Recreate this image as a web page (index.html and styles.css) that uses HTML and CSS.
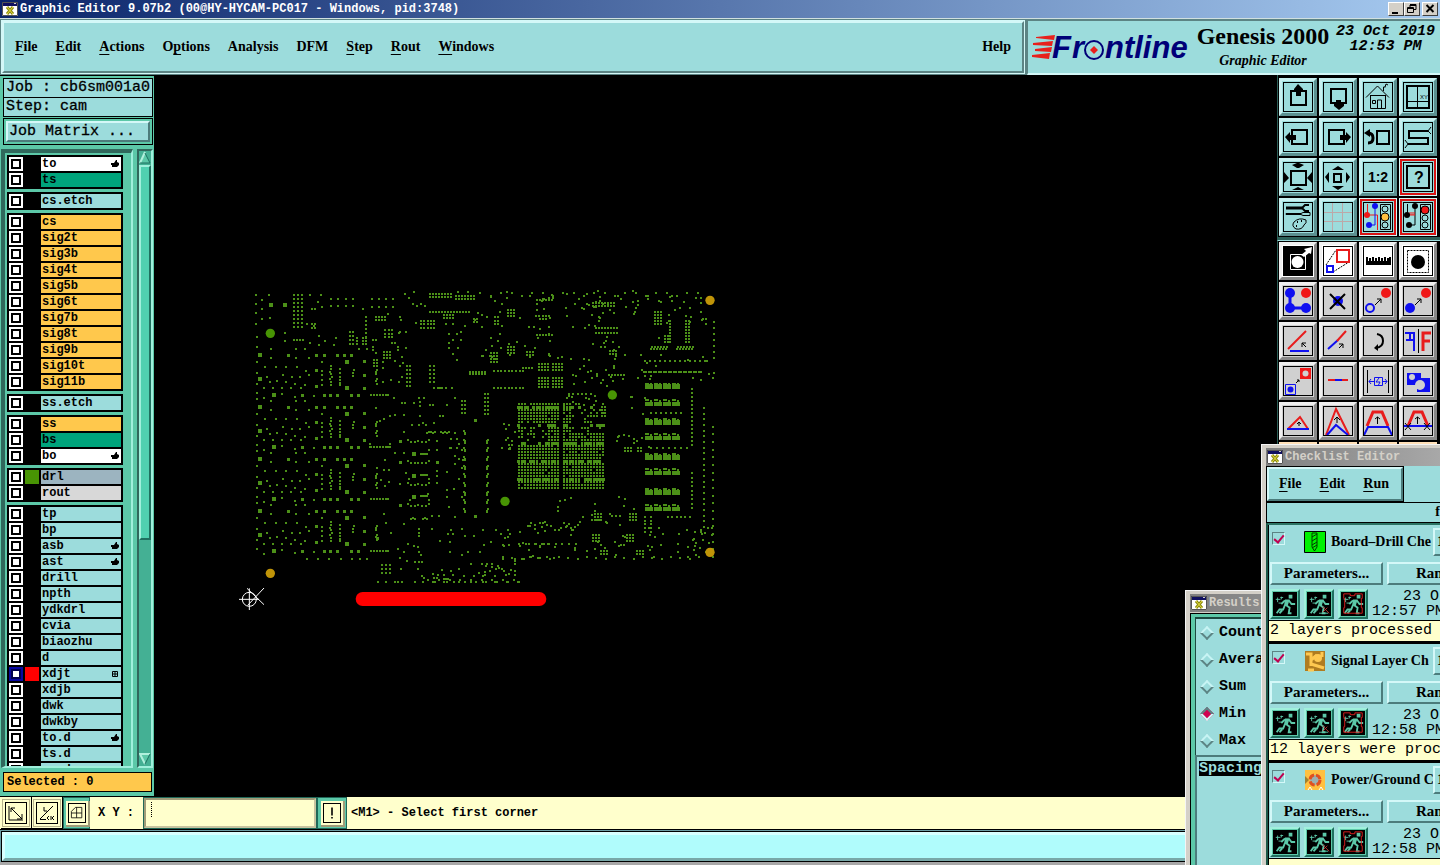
FILE: index.html
```html
<!DOCTYPE html>
<html lang="en">
<head>
<meta charset="utf-8">
<title>Graphic Editor</title>
<link rel="stylesheet" href="styles.css">
</head>

<body>
<svg class="defs" aria-hidden="true">
	<symbol id="win" viewBox="0 0 16 14">
		<path d="M0 0h16v14H0z" fill="#fff"/><path d="M0 0h16v4H0z" fill="#101060"/><path d="M12 1h2v1h-2z" fill="#ccc"/>
		<path d="M0.500 0.500h15v13h-15z" fill="none" stroke="#555"/>
		<path d="M5 5l6 7M11 5l-6 7" stroke="#8a8a10" stroke-width="3"/><path d="M5 5l6 7M11 5l-6 7" stroke="#e8e040"/>
	</symbol>
	<symbol id="run" viewBox="0 0 26 26">
		<path d="M0 0h26v26H0z" fill="#000"/>
		<path d="M17 3h4v4h-4zM13 8h5l-2 7h-4z" fill="#5cc8a8"/>
		<path d="M17 9l3 4h4M13 9l-4 4M14 14l4 3-1 6h3M13 14l-2 5H7l-3 4M10 20l-3 3" fill="none" stroke="#5cc8a8" stroke-width="2"/>
		<path d="M3 8h5M5 6v5M8 6h3M9 5v3M6 12h3" stroke="#5cc8a8"/>
	</symbol>
	<symbol id="hand" viewBox="0 0 8 8"><path d="M0 3h3l2-3h1v2l2 1v2L6 7H1V5H0z"/></symbol>
</svg>

<header class="titlebar">
	<svg class="winicon"><use href="#win"/></svg>
	<h1>Graphic Editor 9.07b2 (00@HY-HYCAM-PC017 - Windows, pid:3748)</h1>
	<button class="winbtn" aria-label="Minimize"><svg viewBox="0 0 14 12"><path d="M3 9h6v2H3z"/></svg></button>
	<button class="winbtn" aria-label="Restore"><svg viewBox="0 0 14 12"><path d="M5 1.500h6v5H9M5 2.500h6M5 2v2M2.500 4.500h6v5h-6zM2 5.500h7" fill="none" stroke="#000"/></svg></button>
	<button class="winbtn close" aria-label="Close"><svg viewBox="0 0 14 12"><path d="M3.500 2l7 7M10.500 2l-7 7" stroke="#000" stroke-width="2"/></svg></button>
</header>

<div class="top">
	<nav class="menubar">
		<button><u>F</u>ile</button>
		<button><u>E</u>dit</button>
		<button><u>A</u>ctions</button>
		<button>O<u>p</u>tions</button>
		<button>Analysis</button>
		<button>DFM</button>
		<button><u>S</u>tep</button>
		<button><u>R</u>out</button>
		<button><u>W</u>indows</button>
		<button class="help">Help</button>
	</nav>
	<div class="brand">
		<svg class="logo" viewBox="0 0 160 28" role="img" aria-label="Frontline">
			<path d="M23 2L4 4v1l18 2zM21 8L1 10v2l19 1zM20 14L3 16v2l16 1zM18 20L0 22v2l17 2z" fill="#e8201c"/>
			<text x="20" y="25" class="logotext">F</text>
			<text x="40" y="25" class="logotext">r</text>
			<text x="73" y="25" class="logotext">ntline</text>
			<circle cx="62" cy="17" r="9" fill="#9cdcdc" stroke="#000078" stroke-width="2"/>
			<path d="M62 13l4 4-4 4-4-4z" fill="#e8201c"/>
		</svg>
		<div class="product">
			<strong>Genesis 2000</strong>
			<em>Graphic Editor</em>
		</div>
		<div class="clock"><span>23 Oct 2019</span><span>12:53 PM</span></div>
	</div>
</div>

<main class="main">
	<aside class="side">
		<div class="info">
			<p>Job : cb6sm001a0</p>
			<p>Step: cam</p>
		</div>
		<div class="matrix"><button>Job Matrix ...</button></div>
		<div class="layers">
			<div class="list">
				<div class="group">
					<label class="white"><input type="checkbox"><i></i><span>to</span><svg><use href="#hand"/></svg></label>
					<label class="green"><input type="checkbox"><i></i><span>ts</span></label>
				</div>
				<div class="group">
					<label><input type="checkbox"><i></i><span>cs.etch</span></label>
				</div>
				<div class="group orange">
					<label><input type="checkbox"><i></i><span>cs</span></label>
					<label><input type="checkbox"><i></i><span>sig2t</span></label>
					<label><input type="checkbox"><i></i><span>sig3b</span></label>
					<label><input type="checkbox"><i></i><span>sig4t</span></label>
					<label><input type="checkbox"><i></i><span>sig5b</span></label>
					<label><input type="checkbox"><i></i><span>sig6t</span></label>
					<label><input type="checkbox"><i></i><span>sig7b</span></label>
					<label><input type="checkbox"><i></i><span>sig8t</span></label>
					<label><input type="checkbox"><i></i><span>sig9b</span></label>
					<label><input type="checkbox"><i></i><span>sig10t</span></label>
					<label><input type="checkbox"><i></i><span>sig11b</span></label>
				</div>
				<div class="group">
					<label><input type="checkbox"><i></i><span>ss.etch</span></label>
				</div>
				<div class="group">
					<label class="amber"><input type="checkbox"><i></i><span>ss</span></label>
					<label class="green"><input type="checkbox"><i></i><span>bs</span></label>
					<label class="white"><input type="checkbox"><i></i><span>bo</span><svg><use href="#hand"/></svg></label>
				</div>
				<div class="group">
					<label class="slate shown"><input type="checkbox"><i></i><span>drl</span></label>
					<label class="grey"><input type="checkbox"><i></i><span>rout</span></label>
				</div>
				<div class="group">
					<label><input type="checkbox"><i></i><span>tp</span></label>
					<label><input type="checkbox"><i></i><span>bp</span></label>
					<label><input type="checkbox"><i></i><span>asb</span><svg><use href="#hand"/></svg></label>
					<label><input type="checkbox"><i></i><span>ast</span><svg><use href="#hand"/></svg></label>
					<label><input type="checkbox"><i></i><span>drill</span></label>
					<label><input type="checkbox"><i></i><span>npth</span></label>
					<label><input type="checkbox"><i></i><span>ydkdrl</span></label>
					<label><input type="checkbox"><i></i><span>cvia</span></label>
					<label><input type="checkbox"><i></i><span>biaozhu</span></label>
					<label><input type="checkbox"><i></i><span>d</span></label>
					<label class="work"><input type="checkbox" checked><i></i><span>xdjt</span><svg viewBox="0 0 8 8"><path d="M1.500 1.500h5v5h-5zM4 1v6M1 4h6" fill="none" stroke="#000"/></svg></label>
					<label><input type="checkbox"><i></i><span>xdjb</span></label>
					<label><input type="checkbox"><i></i><span>dwk</span></label>
					<label><input type="checkbox"><i></i><span>dwkby</span></label>
					<label><input type="checkbox"><i></i><span>to.d</span><svg><use href="#hand"/></svg></label>
					<label><input type="checkbox"><i></i><span>ts.d</span></label>
					<label><input type="checkbox"><i></i><span>ss.d</span></label>
				</div>
			</div>
			<div class="scroll">
				<svg class="arrow" viewBox="0 0 12 14"><path d="M6 2l5 10H1z" fill="#5cc8a8"/><path d="M6 1L1 12" stroke="#b0f0dc" stroke-width="2"/><path d="M6 2l5 10H1" fill="none" stroke="#1e7060"/></svg>
				<div class="thumb"></div>
				<svg class="arrow" viewBox="0 0 12 14"><path d="M1 2h10L6 12z" fill="#5cc8a8"/><path d="M11 2H1l5 10" fill="none" stroke="#b0f0dc" stroke-width="2"/><path d="M11 2L6 12" stroke="#1e7060"/></svg>
			</div>
		</div>
		<p class="selected">Selected : 0</p>
	</aside>

	<section class="canvas">
		<svg id="board" class="board" viewBox="0 0 1500 1020">
			<rect x="362" y="936" width="572" height="42" rx="21" fill="#f00"/>
			<g fill="none" stroke="#fff" stroke-width="3"><circle cx="43" cy="958" r="21"/><path d="M12 958h60M43 925v65M36 925l51 49M87 924l-49 52"/></g>
		</svg>
	</section>

	<aside class="tools">
		<div class="toolset">
			<button aria-label="Pan up"><svg><path d="M8 9h15v14H8z" class="k2"/><path d="M15 2l5 5v3h-2v4h-5v-4h-2V7z"/></svg></button>
			<button aria-label="Pan down"><svg><path d="M8 7h15v14H8z" class="k2"/><path d="M13 18h5v4h3v2l-5 4-5-4v-2h2z"/></svg></button>
			<button aria-label="Home"><svg><path d="M3 15.500L14.500 4 26 15.500M7.500 13.500v13h15v-13M14.500 26v-8h4v8M9.500 18.500h3v3h-3zM20.500 9V5h2M22 5l1-3 2 1M7 13.500h16" class="k1"/></svg></button>
			<button aria-label="Coordinates"><svg><path d="M4 4h22v22H4z" class="k2"/><path d="M14.500 4v22M4 19.500h22" class="k1"/><text x="17" y="17" class="tiny">XY</text></svg></button>
			<button aria-label="Pan left"><svg><path d="M9 8h15v14H9z" class="k2"/><path d="M2 15l5-5v3h6v5H7v3z"/></svg></button>
			<button aria-label="Pan right"><svg><path d="M6 8h15v14H6z" class="k2"/><path d="M28 15l-5-5v3h-6v5h6v3z"/></svg></button>
			<button aria-label="Previous view"><svg><path d="M14 9h12v13H14z" class="k2"/><path d="M5 11q5 0 5 5t-5 5" class="k3"/><path d="M1 11l6-4v8z"/></svg></button>
			<button aria-label="Serpentine"><svg><path d="M25 9H6v7h19v6H5" class="k2"/><path d="M25 9l3-4M25 9l3 3M5 22l-3-4M5 22l-3 4" class="k1"/></svg></button>
			<button aria-label="Zoom out"><svg><path d="M8 9h15v14H8z" class="k2"/><path d="M9 3l5-2h2l5 2-5 3h-2zM9 28l6-3 6 3zM1 10l5 6-5 5zM29 10l-5 6 5 5z"/></svg></button>
			<button aria-label="Zoom in"><svg><path d="M11 12h7v8h-7z" class="k2"/><path d="M9 8l6-4 6 4zM9 24l6 4 6-4zM6 10l-4 5 4 6zM23 10l4 5-4 6z"/></svg></button>
			<button aria-label="Scale"><svg><text x="15" y="20" class="scale">1:2</text></svg></button>
			<button class="red" aria-label="Query"><svg><path d="M4 4h22v22H4z" class="k2"/><text x="16" y="21" class="ask">?</text></svg></button>
			<button aria-label="Setup"><svg><path d="M3 6h16" class="k3"/><path d="M26 3h-4l-3 3 3 3h4" class="k2"/><path d="M3 11.500h15l2-1h7v3h-7l-2-1H3z" class="k1"/><path d="M11 20q5-5 12-2 1 3-2 5-2 5-8 4-5-3-2-7z" class="k1"/><path d="M14 20h1M18 19h1M13 24h1" class="k2"/></svg></button>
			<button aria-label="Grid"><svg><path d="M9.500 1v28M19.500 1v28M1 10.500h28M1 19.500h28" stroke="#bca8a8" fill="none"/></svg></button>
			<button class="red" aria-label="Feature check"><svg><path d="M17.500 2.500h10v25h-10z" class="k1"/><path d="M4.500 2v11h10v15" class="r1"/><path d="M12 4v19H6" class="b1"/><circle cx="4" cy="13" r="3" class="r"/><circle cx="12" cy="4" r="3" class="b"/><circle cx="6" cy="23" r="3" class="b"/><circle cx="22" cy="7" r="3" class="k1"/><circle cx="22" cy="15" r="4" fill="#ffc040" stroke="#000"/><circle cx="22" cy="23" r="3" class="k1"/></svg></button>
			<button class="red" aria-label="Net check"><svg><path d="M17.500 2.500h10v25h-10z" class="k1"/><path d="M4.500 2v11M12 4v19H6" class="k1"/><path d="M7 13v-3M9 13v-3M11 13v-3M6 13h6" class="r1"/><circle cx="4" cy="13" r="3"/><circle cx="12" cy="4" r="3"/><circle cx="6" cy="23" r="3"/><circle cx="22" cy="8" r="4" class="r" stroke="#000"/><circle cx="22" cy="16" r="3" class="k1"/><circle cx="22" cy="23" r="3" class="k1"/></svg></button>
		</div>
		<div class="toolset edit">
			<button class="white" aria-label="Select single"><svg><path d="M0 0h30v30H0z"/><path d="M7.500 8.500h15v15h-15z" fill="none" stroke="#fff"/><circle cx="14.500" cy="16" r="6" fill="#fff"/><path d="M18 9l5-4-2-2 8-2-1 7-2-1-5 4z" fill="#fff"/></svg></button>
			<button class="white" aria-label="Select frame"><svg><path d="M3 19L13 4M10 26l16-10" class="k1" stroke-dasharray="2 1"/><path d="M14 4h12v12H14z" class="r2"/><path d="M4 20h6v6H4z" class="b2"/></svg></button>
			<button class="white" aria-label="Measure"><svg><path d="M3 15h25v4H3z"/><path d="M4 11v5M7 12v4M10 11v5M13 12v4M16 11v5M19 12v4M22 11v5M25 12v4M27 11v5" class="k2"/></svg></button>
			<button class="white" aria-label="Highlight"><svg><path d="M4.500 4.500h21v22h-21z" class="k1" stroke-dasharray="2 1"/><circle cx="15" cy="16" r="7"/></svg></button>
			<button aria-label="Select net"><svg><path d="M7 7v15h16" class="b3"/><circle cx="7" cy="7" r="5" class="b"/><circle cx="7" cy="22" r="5" class="b"/><circle cx="23" cy="22" r="5" class="b"/><circle cx="23" cy="7" r="5" class="r"/></svg></button>
			<button aria-label="Delete"><svg><circle cx="15" cy="15" r="5" class="b"/><path d="M7 8l15 15M22 8L7 23" class="k2"/></svg></button>
			<button aria-label="Move"><svg><circle cx="7" cy="22" r="4" class="b2"/><circle cx="23" cy="7" r="5" class="r"/><path d="M12 19l6-6M14 13h4v4" class="k1"/></svg></button>
			<button aria-label="Copy"><svg><circle cx="7" cy="22" r="5" class="b"/><circle cx="23" cy="7" r="5" class="r"/><path d="M12 19l6-6M14 13h4v4" class="k1"/></svg></button>
			<button aria-label="Rotate"><svg><path d="M7 25h19" class="b2"/><path d="M5 23L23 5" class="r2"/><path d="M23 21l-4-4M19 21v-4h4" class="k1"/></svg></button>
			<button aria-label="Stretch"><svg><path d="M5 23l10-9" class="b2"/><path d="M14 15l9-10" class="r2"/><path d="M16 22l4-4M16 18h4v4" class="k1"/></svg></button>
			<button aria-label="Turn"><svg><path d="M14 8q6 1 6 7t-7 7" class="k2"/><path d="M11 22l4-4v7z"/></svg></button>
			<button aria-label="Mirror"><svg><path d="M2 7h9v18M3 14h8M7 7v7" class="b2"/><path d="M15.500 3v24" class="k1"/><path d="M28 7h-8v18M27 15h-7" class="r3"/></svg></button>
			<button aria-label="Change symbol"><svg><path d="M2.500 18.500h10v10h-10z" class="b1"/><circle cx="7.500" cy="23.500" r="3" class="b"/><path d="M17 2h11v11H17z" class="r"/><circle cx="22.500" cy="7.500" r="3" fill="#d0d0d0"/><path d="M13 17l3-3M14 14h2v2" class="k1"/></svg></button>
			<button aria-label="Break line"><svg><path d="M5 14h20" class="r2"/><path d="M12 14h7" class="b2"/></svg></button>
			<button aria-label="Spacing"><svg><path d="M4.500 4v23M25.500 4v23" class="k1"/><path d="M11.500 11.500h8v8h-8zM16 12l-3 4h4l-2 4M11 15.500H6M8 13l-2 2.500 2 2.500M20 15.500h4M22 13l2 2.500-2 2.500" class="b1"/></svg></button>
			<button aria-label="Merge"><svg><path d="M4 7h14v5h9v14H14v-7H4z" class="b"/><circle cx="9" cy="11" r="3" fill="#d0d0d0"/><circle cx="17" cy="19" r="5" fill="#d0d0d0"/></svg></button>
			<button aria-label="Add corner"><svg><path d="M5 23l12-12 8 12" class="r2"/><path d="M4 23h22" class="b2"/><path d="M16 20v-4M14 18l2-2 2 2" class="k1"/></svg></button>
			<button aria-label="Move corner"><svg><path d="M3 29L13 3l13 26" class="r2"/><path d="M4 29l9-10 12 10" class="b2"/><path d="M14 17v-6M11 14l3-3 3 3" class="k1"/></svg></button>
			<button aria-label="Move edge"><svg><path d="M4 20l6-14h9l6 14" class="r3"/><path d="M1 29l4-8h20l4 8" class="b2"/><path d="M14.500 18v-7M12 13l2.500-2 2.500 2" class="k1"/></svg></button>
			<button aria-label="Slide edge"><svg><path d="M5 20l6-14h8l6 14" class="r3"/><path d="M1 20h28" class="b2"/><path d="M14.500 18v-7M12 13l2.500-2 2.500 2M2 17l6 7M8 17l-6 7M21 17l6 7M27 17l-6 7" class="k1"/></svg></button>
			<button class="peach" aria-label="Arc"></button>
			<button class="peach" aria-label="Line"></button>
			<button class="peach" aria-label="Pad"></button>
			<button class="peach" aria-label="Surface"></button>
		</div>
	</aside>
</main>

<div class="status">
	<button class="mode" aria-label="Snap"><svg viewBox="0 0 20 20"><path d="M3 3v14h14M5 5l11 11M5 9V5h4M16 11v5h-5" class="k1"/></svg></button>
	<button class="mode" aria-label="Angle"><svg viewBox="0 0 20 20"><path d="M3 16L16 3M3 16.500h6M7 4v4h3M12 17l-2-2 2-2M14 13v4M17 13l-2 2 2 2" class="k1"/></svg></button>
	<button class="mode on" aria-label="Grid snap"><svg viewBox="0 0 20 20"><path d="M3 16V8l5-5h8v13zM3 10h13M9.500 3v13" class="k1"/></svg></button>
	<label for="xy">X Y :</label>
	<input id="xy" type="text">
	<button class="mode on alert" aria-label="Messages"><svg viewBox="0 0 20 20"><path d="M9 3h2v10H9zM9 15h2v2H9z"/></svg></button>
	<p>&lt;M1&gt; - Select first corner</p>
</div>
<div class="message"><div></div></div>

<section class="window results">
	<h2><svg class="winicon"><use href="#win"/></svg>Results</h2>
	<div class="frame">
		<div class="options">
			<label><input type="radio" name="stat">Count</label>
			<label><input type="radio" name="stat">Avera</label>
			<label><input type="radio" name="stat">Sum</label>
			<label><input type="radio" name="stat" checked>Min</label>
			<label><input type="radio" name="stat">Max</label>
		</div>
		<div class="values"><span>Spacing</span></div>
	</div>
</section>

<section class="window checklist">
	<h2><svg class="winicon"><use href="#win"/></svg>Checklist Editor</h2>
	<div class="menustrip">
		<nav class="submenu">
			<button><u>F</u>ile</button>
			<button><u>E</u>dit</button>
			<button><u>R</u>un</button>
		</nav>
	</div>
	<p class="name">f</p>
	<div class="checks">
		<article>
			<div class="head">
				<input type="checkbox" checked aria-label="Board-Drill">
				<svg viewBox="0 0 22 22"><path d="M0.500 0.500h21v21h-21z" fill="#00f000" stroke="#000"/><path d="M8 2h5v14l-2.500 4L8 16zM8 6l5-3M8 10l5-3M8 14l5-3M8 17l5-3" fill="none" stroke="#003800"/></svg>
				<h3>Board–Drill Che</h3><button>1</button>
			</div>
			<div class="row"><button>Parameters...</button><button class="cut">Ran</button></div>
			<div class="row run">
				<button aria-label="Run"><svg><use href="#run"/></svg></button>
				<button aria-label="Run on features"><svg viewBox="0 0 26 26"><use href="#run"/><path d="M17 16l7 7M22 17l-5 5" stroke="#c03030"/><path d="M13 23h10" stroke="#5cc8a8"/></svg></button>
				<button aria-label="Run in profile"><svg viewBox="0 0 26 26"><use href="#run"/><path d="M3 2h7v2h5V2h8v5h-1v10h1v6H3v-6h1V7H3z" fill="none" stroke="#e02020"/></svg></button>
				<p><span>23 O</span><span>12:57 PM</span></p>
			</div>
			<p class="result">2 layers processed</p>
		</article>
		<article>
			<div class="head">
				<input type="checkbox" checked aria-label="Signal Layer">
				<svg viewBox="0 0 22 22"><path d="M1 1h20v20H1z" fill="#b07c20"/><path d="M2 4h5v12M7 10l6-5M7 14l13 4M4 20h6M18 2v5" stroke="#ffc850" stroke-width="3" fill="none"/><circle cx="14" cy="8" r="4" fill="#ffc850"/></svg>
				<h3>Signal Layer Ch</h3><button>1</button>
			</div>
			<div class="row"><button>Parameters...</button><button class="cut">Ran</button></div>
			<div class="row run">
				<button aria-label="Run"><svg><use href="#run"/></svg></button>
				<button aria-label="Run on features"><svg viewBox="0 0 26 26"><use href="#run"/><path d="M17 16l7 7M22 17l-5 5" stroke="#c03030"/><path d="M13 23h10" stroke="#5cc8a8"/></svg></button>
				<button aria-label="Run in profile"><svg viewBox="0 0 26 26"><use href="#run"/><path d="M3 2h7v2h5V2h8v5h-1v10h1v6H3v-6h1V7H3z" fill="none" stroke="#e02020"/></svg></button>
				<p><span>23 O</span><span>12:58 PM</span></p>
			</div>
			<p class="result">12 layers were proc</p>
		</article>
		<article>
			<div class="head">
				<input type="checkbox" checked aria-label="Power/Ground">
				<svg viewBox="0 0 22 22"><path d="M1 1h20v20H1z" fill="#ffc040"/><circle cx="11" cy="11" r="5" fill="#9cb0b0" stroke="#e05020" stroke-width="3" stroke-dasharray="6 2"/><path d="M1 7l4 4-4 4" fill="#a08030"/><path d="M4 21l2-3 2 3M15 21l2-3 2 3" stroke="#fff" fill="none"/></svg>
				<h3>Power/Ground C</h3><button>1</button>
			</div>
			<div class="row"><button>Parameters...</button><button class="cut">Ran</button></div>
			<div class="row run">
				<button aria-label="Run"><svg><use href="#run"/></svg></button>
				<button aria-label="Run on features"><svg viewBox="0 0 26 26"><use href="#run"/><path d="M17 16l7 7M22 17l-5 5" stroke="#c03030"/><path d="M13 23h10" stroke="#5cc8a8"/></svg></button>
				<button aria-label="Run in profile"><svg viewBox="0 0 26 26"><use href="#run"/><path d="M3 2h7v2h5V2h8v5h-1v10h1v6H3v-6h1V7H3z" fill="none" stroke="#e02020"/></svg></button>
				<p><span>23 O</span><span>12:58 PM</span></p>
			</div>
			<p class="result"></p>
		</article>
	</div>
</section>
<script src="board.js"></script>
</body>
</html>
```

FILE: styles.css
```css
* {
	box-sizing: border-box;
}

body {
	margin: 0;
	height: 100vh;
	overflow: hidden;
	display: flex;
	flex-direction: column;
	background: #000;
	color: #000;
	font-family: "Liberation Mono", "Courier New", monospace;
	font-size: 12px;
	font-weight: bold;
}

h1, h2, h3, p {
	margin: 0;
	font-size: inherit;
}

button {
	font: inherit;
	color: inherit;
	margin: 0;
	padding: 0;
	border: 0;
	background: none;
	border-radius: 0;
}

u {
	text-underline-offset: 3px;
}

.defs {
	position: absolute;
	width: 0;
	height: 0;
}

/* icon strokes */
.k1 { fill: none; stroke: #000; }
.k2 { fill: none; stroke: #000; stroke-width: 2; }
.k3 { fill: none; stroke: #000; stroke-width: 3; }
.r { fill: #f01818; }
.r1 { fill: none; stroke: #f01818; }
.r2 { fill: none; stroke: #e81c1c; stroke-width: 2; }
.r3 { fill: none; stroke: #e81c1c; stroke-width: 3; }
.b { fill: #1010f0; }
.b1 { fill: none; stroke: #1010f0; }
.b2 { fill: none; stroke: #1010f0; stroke-width: 2; }
.b3 { fill: none; stroke: #1010f0; stroke-width: 3; }

/* title bar */
.titlebar {
	display: flex;
	align-items: center;
	height: 18px;
	padding: 0 2px;
	background: linear-gradient(90deg, #0a246a, #a6caf0);
	color: #fff;
}

.titlebar h1 {
	flex: 1;
	white-space: nowrap;
}

.winicon {
	width: 16px;
	height: 14px;
	margin-right: 2px;
	flex: none;
}

.winbtn {
	width: 16px;
	height: 14px;
	background: #d4d0c8;
	border: 1px solid;
	border-color: #fff #404040 #404040 #fff;
}

.winbtn svg {
	display: block;
	width: 14px;
	height: 12px;
}

.winbtn.close {
	margin-left: 2px;
}

/* menu and brand */
.top {
	display: flex;
	height: 57px;
	font-family: "Liberation Serif", "Times New Roman", serif;
	font-size: 14px;
	background: #5c8484;
	border-top: 1px solid #d0e0e0;
	padding-top: 2px;
	gap: 3px;
}

.menubar {
	flex: 1;
	display: flex;
	align-items: center;
	gap: 18px;
	padding: 0 11px;
	background: #9cdcdc;
	border: 2px solid;
	border-color: #d4f8f8 #5c8484 #5c8484 #d4f8f8;
	outline: 1px solid #d4f8f8;
	margin: 0 0 2px 2px;
}

.menubar .help {
	margin-left: auto;
}

.brand {
	width: 413px;
	display: flex;
	background: #9cdcdc;
	border-bottom: 2px solid #d4f8f8;
	border-left: 1px solid #5c8484;
}

.logo {
	width: 160px;
	height: 28px;
	margin: 12px 2px 0 4px;
	flex: none;
	overflow: visible;
}

.logotext {
	font: italic bold 31px "Liberation Sans", Arial, sans-serif;
	fill: #000078;
}

.product {
	width: 138px;
	text-align: center;
	flex: none;
}

.product strong {
	display: block;
	font-size: 24px;
	line-height: 30px;
	white-space: nowrap;
}

.product em {
	display: block;
	line-height: 20px;
}

.clock {
	font: italic bold 15px/15px "Liberation Mono", monospace;
	padding: 3px 0 0 4px;
	text-align: center;
	white-space: nowrap;
}

.clock span {
	display: block;
}

.main {
	flex: 1;
	min-height: 0;
	display: flex;
}

/* left side */
.side {
	width: 154px;
	margin: 1px 1px 0 0;
	padding: 2px 1px 2px 3px;
	display: flex;
	flex-direction: column;
	background: #5cc8a8;
}

.info p {
	height: 20px;
	padding-left: 2px;
	font-size: 15px;
	line-height: 17px;
	font-weight: normal;
	-webkit-text-stroke: 0.3px #000;
	border: 1px solid #000;
	background: #9cdcdc;
	white-space: nowrap;
}

.info p + p {
	margin-top: -1px;
}

.matrix {
	margin-top: 1px;
	border: 1px solid #000;
	padding: 2px;
}

.matrix button {
	display: block;
	width: 100%;
	height: 21px;
	font-size: 15px;
	font-weight: normal;
	-webkit-text-stroke: 0.3px #000;
	text-align: left;
	padding-left: 1px;
	background: #9cdcdc;
	border: 2px solid;
	border-color: #d4f8f8 #4c7c7c #4c7c7c #d4f8f8;
}

.layers {
	flex: 1;
	min-height: 0;
	margin: 4px 0 4px -2px;
	display: flex;
	gap: 4px;
}

.list {
	flex: 1;
	overflow: hidden;
	padding: 2px 8px 0 2px;
	border: solid;
	border-width: 4px 2px 2px 4px;
	border-color: #30685c #a0f0dc #a0f0dc #30685c;
}

.group {
	padding: 1px 0;
	margin-bottom: 3px;
	background: #000;
}

.group label {
	display: flex;
	align-items: center;
	height: 16px;
	padding: 0 2px;
	gap: 2px;
}

.group input {
	appearance: none;
	width: 14px;
	height: 14px;
	margin: 0;
	border: 2px solid #fff;
	background: #fff;
	box-shadow: inset 0 0 0 2px #000;
}

.group input:checked {
	border-color: #0808a0;
	box-shadow: inset 0 0 0 2px #000050;
}

.group i {
	width: 14px;
	height: 14px;
}

.group span {
	flex: 1;
	height: 14px;
	line-height: 14px;
	padding-left: 1px;
	background: #9cdcdc;
}

.group label svg {
	width: 8px;
	height: 8px;
	margin-left: -12px;
	margin-right: 2px;
}

.orange span, .amber span { background: #ffc84c; }
.green span { background: #00a47c; }
.white span { background: #fff; }
.slate span { background: #9cb4c0; }
.grey span { background: #d8d8d8; }
.shown i { background: #489404; }
.work i { background: #f00; }

.scroll {
	width: 16px;
	display: flex;
	flex-direction: column;
	align-items: center;
	background: #44b094;
	border: 2px solid;
	border-color: #30685c #a0f0dc #a0f0dc #30685c;
}

.arrow {
	width: 12px;
	height: 14px;
	flex: none;
}

.thumb {
	width: 12px;
	height: 61%;
	margin-bottom: auto;
	background: #50d0b0;
	border: 2px solid;
	border-color: #a0f0dc #207060 #207060 #a0f0dc;
}

.selected {
	height: 20px;
	line-height: 18px;
	padding-left: 3px;
	border: 1px solid #000;
	background: #ffc84c;
	margin: 0 1px 2px 0;
}

/* drawing */
.canvas {
	flex: 1;
	min-width: 0;
	overflow: hidden;
}

.board {
	display: block;
	width: 500px;
	height: 340px;
	margin: 205px 0 0 80px;
}

/* right tools */
.tools {
	width: 163px;
	overflow: hidden;
	background: #2c6058;
}

.toolset {
	display: grid;
	grid-template-columns: repeat(4, 38px);
	grid-auto-rows: 38px;
	gap: 2px;
	padding: 3px 2px 1px 1px;
	background: #000;
	border-left: 1px solid #2c6058;
	border-bottom: 1px solid #2c6058;
}

.toolset button {
	border: 3px solid;
	border-color: #c8f0f0 #5c9090 #5c9090 #c8f0f0;
	background: #9cdcdc;
	padding: 1px;
}

.toolset svg {
	display: block;
	width: 30px;
	height: 30px;
	outline: 1px solid #000;
	outline-offset: -1px;
}

.toolset .red {
	border-color: #d81414;
	outline: 1px solid #d4f8f8;
	outline-offset: -1px;
}

.toolset.edit {
	margin-top: 2px;
	padding-top: 1px;
	border-top: 1px solid #9cdcdc;
}

.edit button {
	background: #d0d0d0;
	border-color: #f0f0f0 #888 #888 #f0f0f0;
}

.edit .white {
	background: #fff;
}

.edit .peach {
	background: #f0c890;
	border-color: #ffe0b8;
}

.tiny {
	font: 6px "Liberation Sans", sans-serif;
}

.scale {
	font: bold 14px "Liberation Sans", sans-serif;
	text-anchor: middle;
}

.ask {
	font: bold 16px "Liberation Sans", sans-serif;
	text-anchor: middle;
}

/* bottom */
.status {
	display: flex;
	align-items: center;
	height: 34px;
	padding-left: 1px;
	border: solid #000;
	border-width: 1px 0;
	background: #ffffcc;
	white-space: nowrap;
}

.mode {
	width: 31px;
	height: 32px;
	padding: 3px;
	border: solid #000;
	border-width: 0 1px 1px 0;
}

.mode svg {
	display: block;
	width: 20px;
	height: 20px;
	margin: 1px auto;
	outline: 1px solid #000;
	box-shadow: 0 0 0 3px #ffffcc, 0 0 0 4px #b8b48c;
}

.mode.on {
	width: 27px;
	background: #5cc8a8;
	border: 1px solid #206858;
}

.mode.on svg {
	background: #ffffcc;
	width: 16px;
	height: 18px;
	box-shadow: 0 0 0 3px #ffffcc, 1px 1px 0 4px #a09c78;
}

.status label {
	margin: 0 10px 0 8px;
}

/* dotted text cursor in the empty field */
.status input {
	width: 172px;
	height: 30px;
	padding: 0 6px;
	font: inherit;
	background: repeating-linear-gradient(#000 0 1px, #ffffcc 1px 2px) 5px 2px / 1px 15px no-repeat #ffffcc;
	border: 2px solid;
	border-color: #a09c78 #c8c4a0 #c8c4a0 #a09c78;
	outline: 1px solid #206858;
}

.mode.alert {
	width: 30px;
	margin: 0 4px 0 1px;
}

.message {
	height: 35px;
	padding: 2px 0 5px 2px;
	background: #6c9ca4;
	border-bottom: 3px solid #a8a8a8;
}

.message div {
	height: 29px;
	background: #b0fcfc;
	border: solid;
	border-width: 3px 0 3px 3px;
	border-color: #d8ffff #d8ffff #78a8a8 #d8ffff;
	outline: 1px solid #000;
}

/* floating windows */
.window {
	position: absolute;
	right: 0;
	bottom: 0;
	display: flex;
	flex-direction: column;
	overflow: hidden;
	padding: 3px 0 0 4px;
	background: #d4d0c8;
	border-top: 1px solid #f4f4f4;
	border-left: 1px solid #f4f4f4;
	white-space: nowrap;
}

.window h2 {
	display: flex;
	align-items: center;
	height: 18px;
	flex: none;
	background: linear-gradient(90deg, #808080, #a8a8a8);
	color: #d4d0c8;
}

.results {
	top: 590px;
	width: 255px;
}

.results h2 {
	padding-left: 1px;
}

.frame {
	flex: 1;
	display: flex;
	flex-direction: column;
	margin-top: 1px;
	padding: 3px 0 0 4px;
	background: #5cc8a8;
	border-top: 1px solid #000;
	border-left: 1px solid #000;
	font-size: 15px;
}

.options {
	height: 138px;
	padding-left: 4px;
	background: #9cdcdc;
	border-top: 2px solid #1c4840;
	border-left: 1px solid #1c4840;
}

.options label {
	display: flex;
	align-items: center;
	height: 27px;
}

.options input {
	appearance: none;
	width: 10px;
	height: 10px;
	margin: 0 7px 0 2px;
	transform: rotate(45deg);
	border: 2px solid;
	border-color: #c8f4f4 #5c8484 #5c8484 #c8f4f4;
}

.options input:checked {
	background: #d00050;
	border-color: #5c8484 #d4f8f8 #d4f8f8 #5c8484;
}

.values {
	flex: 1;
	padding: 3px 0 0 2px;
	background: #9cdcdc;
	border: solid #4c7c7c;
	border-width: 2px 0 0 2px;
}

.values span {
	display: inline-block;
	line-height: 15px;
	background: #000;
	color: #9cdcdc;
}

.checklist {
	top: 444px;
	width: 179px;
	font-family: "Liberation Serif", "Times New Roman", serif;
	font-size: 15px;
}

.checklist h2 {
	padding-left: 1px;
	font: bold 12px "Liberation Mono", monospace;
}

.menustrip {
	height: 36px;
	flex: none;
	padding: 1px 0 0 1px;
	background: #9cdcdc;
}

.submenu {
	width: 136px;
	height: 34px;
	display: flex;
	align-items: center;
	gap: 18px;
	padding-left: 10px;
	font-size: 14px;
	border: 2px solid;
	border-color: #d4f8f8 #4c7c7c #4c7c7c #d4f8f8;
	outline: 1px solid #000;
}

.name {
	height: 21px;
	flex: none;
	line-height: 18px;
	text-align: right;
	font-size: 14px;
	border: 1px solid #000;
	border-right: 0;
	background: #9cdcdc;
}

.checks {
	flex: 1;
	min-height: 0;
	padding-top: 2px;
	border-left: 2px solid #1c5848;
	background: #2c7464;
}

.checks article {
	height: 119px;
	background: #9cdcdc;
	border-left: 1px solid #000;
}

.head {
	display: flex;
	align-items: center;
	height: 33px;
}

.head input {
	appearance: none;
	width: 13px;
	height: 13px;
	margin: 0 19px 6px 3px;
	border: 1px solid;
	border-color: #5c8484 #d4f8f8 #d4f8f8 #5c8484;
	position: relative;
	flex: none;
}

.head input:checked::after {
	content: "";
	position: absolute;
	left: 3px;
	top: 0;
	width: 4px;
	height: 8px;
	border: solid #c00050;
	border-width: 0 2px 2px 0;
	transform: rotate(40deg);
}

.head svg {
	width: 22px;
	height: 22px;
	flex: none;
}

.head h3 {
	flex: 1;
	overflow: hidden;
	margin-left: 5px;
	font-size: 14px;
}

.head button {
	width: 7px;
	height: 28px;
	overflow: hidden;
	padding-left: 2px;
	text-align: left;
	font-size: 14px;
	border: solid;
	border-width: 2px 0 2px 2px;
	border-color: #d4f8f8 #4c7c7c #4c7c7c #d4f8f8;
	flex: none;
}

.row {
	display: flex;
	gap: 4px;
	padding: 4px 0 0 1px;
}

.row > button {
	width: 113px;
	height: 23px;
	flex: none;
	border: 2px solid;
	border-color: #d4f8f8 #4c7c7c #4c7c7c #d4f8f8;
}

.row > .cut {
	flex: 1;
	padding-left: 27px;
	border-right: 0;
	text-align: left;
	overflow: hidden;
}

.run > button {
	width: 30px;
	height: 30px;
	background: #5cc8a8;
	border-color: #a0f0dc #207060 #207060 #a0f0dc;
}

.run svg {
	display: block;
	width: 26px;
	height: 26px;
	border: 1px solid #5cc8a8;
}

.run p {
	font: 15px/15px "Liberation Mono", monospace;
	overflow: hidden;
}

.run p span {
	display: block;
}

.run p span:first-child {
	padding-left: 31px;
}

.result {
	height: 24px;
	margin-top: 1px;
	padding-left: 1px;
	font: 15px/20px "Liberation Mono", monospace;
	background: #ffffcc;
	border: solid #000;
	border-width: 1px 0 3px;
	overflow: hidden;
}
```

FILE: board.js
```javascript
var NS = 'http://www.w3.org/2000/svg';
var board = document.getElementById('board');
var d = '';

// one drill hole, centred on x,y
function hole(x, y, w, h) {
	w = w || 6;
	h = h || w;
	x = Math.round((x - w / 2) / 3) * 3;
	y = Math.round((y - h / 2) / 3) * 3;
	d += 'M' + x + ' ' + y + 'h' + w + 'v' + h + 'h-' + w + 'z';
}

function holes(list, ox, oy, size) {
	for (var i = 0; i < list.length; i += 2) {
		hole(list[i] + ox, list[i + 1] + oy, size);
	}
}

// x, y, columns, rows, dx, dy
function grids(list, ox, oy) {
	list.forEach(function (g) {
		for (var r = 0; r < g[3]; r++) {
			for (var c = 0; c < g[2]; c++) {
				hole(g[0] + c * g[4] + ox, g[1] + r * g[5] + oy);
			}
		}
	});
}

var seed = 7;
function rnd() {
	seed = (seed * 16807) % 2147483647;
	return seed / 2147483647;
}

function scatter(x, y, w, h, n) {
	while (n--) {
		hole(x + rnd() * w, y + rnd() * h);
	}
}

// connector rows, repeated down the left side
var small = [66,201,108,207,183,207,210,207,108,234,66,246,183,234,222,234,90,261,123,261,153,261,186,261,213,273,66,279,
	144,285,171,291,96,291,195,291,222,285,126,303,105,306,153,306,66,312,180,312,210,315,87,324,114,324,141,324,168,324,
	198,324,66,339,87,354,141,342,180,352,237,348,261,246,261,273,261,285,261,300,261,315,288,258,288,267,284,276,288,283,
	292,291,285,297,288,306,288,315,315,267,315,279,315,291,315,300,315,308,315,316,357,270,355,279,355,288,
	427,270,423,276,423,282,427,297,423,303,427,311,408,345,417,345,426,345,435,345,444,345,453,345,460,345];
var medium = [160,225,244,225,268,226,307,226,328,226,349,226,388,244,244,272,388,286,244,318,388,325,202,345,268,346,286,345,
	307,346,349,346,370,345];
var large = [75,225,75,297,117,345,336,246,336,325];
for (var t = 0; t < 4; t++) {
	holes(small, 0, t * 156);
	holes(medium, 0, t * 156, 9);
	holes(large, 0, t * 156, 12);
}

// upper left
holes([108,75,150,75], 0, 0, 12);
holes([720,421,495,483], 0, 0, 9);
holes([81,60,102,45,81,87,63,45,63,72,63,99,63,132,81,117,105,114,66,171,150,159,150,183,225,45,258,45,249,66,261,81,
	231,87,240,87,216,132,252,168,252,195,225,189,270,183,297,195,303,174,231,132,240,132,236,138,231,144,240,144,
	384,87,459,102,494,111,497,120,491,160,495,156,513,156,414,180,423,180,414,201,414,210,471,189,480,189,489,201,
	489,210,513,204,423,219,372,207,396,207,444,246,444,264,480,243,501,231,504,249,495,258,468,300,444,306,492,306,
	501,291,597,324,609,324,615,324,621,324,633,324,651,324,510,42,537,36,522,54,534,72,546,78,558,72,570,78,669,36,
	699,36,735,39,729,99,543,129,633,132,654,132,690,138,717,117,726,117,721,121,717,126,726,126,642,162,666,162,
	678,156,654,180,678,180,642,189,642,204,669,204,654,222,666,240,552,354,567,354,555,366,555,378,585,375,594,375,
	636,375,660,354,615,408,624,408,555,408,477,354,501,369,510,369,537,369,423,384,465,408,480,405,507,405,447,417,
	435,423,531,435,552,435,564,429,573,435,597,429,507,456,576,459,582,456,588,456,594,459,600,456,618,456,624,459,
	630,456,636,459,642,456,660,459,519,480,528,486,540,486,549,484,561,486,573,486,582,480,606,484,405,492,405,501,
	465,492,465,501,456,501,648,477,666,477,645,504,666,504], 0, 0);
grids([[177,45,3,9,12,12],[177,180,4,1,9,9],[288,57,4,2,22,21],[411,57,4,2,21,23],[393,111,1,6,9,12],[345,156,2,4,9,12],
	[366,174,1,3,9,9],[384,174,2,3,9,9],[423,111,4,2,9,9],[450,150,3,3,11,11],[447,216,3,3,9,9],[417,240,2,3,9,9],
	[517,258,2,6,9,12],[585,258,2,5,12,12],[585,42,8,2,9,9],[663,48,7,2,9,9],[585,96,14,1,9,9],[627,105,4,2,9,9],
	[558,123,5,3,10,10],[705,276,6,2,9,6],[681,363,2,4,9,12]], 0, 0);

// curved pin columns
for (t = 0; t < 10; t++) {
	var ty = 453 + t * 26;
	holes([687, ty, 690, ty + 5, 690, ty + 9], 0, 0);
	if (t > 0) {
		holes([759, ty, 756, ty + 5, 756, ty + 9], 0, 0);
	}
}

// lower left
holes([537,43,537,108,537,171], 0, 480, 12);
holes([496,67,496,196,606,67,720,229,426,294], 0, 480, 9);
for (t = 0; t < 4; t++) {
	holes([519,0,528,6,540,6,549,4,561,6,573,6,582,0], 0, 480 + t * 64);
}
for (t = 0; t < 3; t++) {
	holes([558,42,564,42,570,42,576,42], 0, 480 + t * 63);
}
holes([507,39,480,39,582,31,606,30,496,131,513,100,606,94,606,108,606,130,583,117,580,163,582,181,525,181,522,117,648,24,
	666,24,672,12,681,31,660,48,672,57,684,60,660,72,681,84,636,96,672,117,657,147,636,151,636,172,642,201,681,171,
	660,231,612,228,591,228,529,238,535,234,541,236,563,236,569,234,575,238,801,24,822,15,831,15,825,27,450,61,447,91,
	462,91,426,85,438,121,462,126,450,139,468,279,453,249,447,222,507,252,552,267,552,279,552,288,591,267,615,303,
	639,282,648,270,654,282,681,267,690,288,645,306,744,270,717,288,768,306,747,315,645,336,681,345,699,336,735,336,
	825,282,810,294,852,312,873,312,900,312,915,321,939,312,822,315,519,312,489,327,507,336,537,318,549,321,552,336,
	558,345,495,354,516,363,540,366,552,366,561,366,549,387,497,387,216,356,249,356,282,356,318,356,351,356,375,356,
	396,356,840,357,867,357,885,351,894,348,909,354,936,351,957,354,804,357,429,426,453,426,480,426,490,426,500,426,
	540,426,561,408,567,414,708,372,741,372,771,372,801,387,828,390,672,387,648,393,621,390,687,408,654,405,717,408,
	732,399,744,408,765,393,780,408,813,405,594,402,609,405,627,405,597,414,606,414,627,417,633,417,639,417,840,363,
	840,372,840,393,840,405,880,258,886,257,889,248,915,248,924,248,936,255,948,257,900,267,909,279,930,273], 0, 480);
for (t = 0; t < 9; t++) {
	holes([563 + t * 36, 426, 580 + t * 32, 420, 594 + t * 32, 426], 0, 480);
}
grids([[441,375,3,3,12,12]], 0, 480);

// right half
for (t = 0; t < 21; t++) {
	hole(768 + t * 31, t % 3 ? 39 : 48);
	hole(804 + t * 28, 831 + (t % 3) * 3);
}
grids([[340,69,8,2,9,10],[347,144,8,2,9,15],[525,96,3,5,9,9],[570,123,1,8,9,9],[555,168,2,3,9,9],[618,123,2,8,9,9],
	[513,207,6,1,9,9],[516,202,6,1,9,9],[591,207,6,1,9,9],[594,202,6,1,9,9],[495,243,13,1,15,9],[387,285,6,1,9,9],
	[390,213,3,2,9,9],[83,90,3,3,9,9],[44,112,2,3,9,10],[83,201,3,3,9,9],[33,219,3,4,9,9],[168,108,5,1,10,9],
	[180,118,3,1,9,9],[171,60,6,1,9,9],[171,165,6,1,9,9],[42,323,9,1,11,9],[42,273,9,1,11,9],[15,342,2,6,9,12],
	[345,702,3,3,9,9],[451,702,3,3,9,9],[339,765,3,3,9,9],[441,765,3,3,9,9],[363,813,3,2,9,9],[471,813,3,2,9,9],
	[702,126,1,7,9,18],[672,384,1,22,9,17],[635,327,1,15,9,12],[636,580,1,9,9,13],[699,440,1,18,9,23],[513,399,7,1,15,9],
	[513,504,7,1,18,9],[177,252,4,3,9,9],[218,252,4,3,9,9],[177,294,4,4,9,9],[218,294,4,4,9,9],[366,381,2,4,9,9],
	[130,264,4,1,9,9],[141,216,3,2,9,9],[435,504,3,2,9,9],[474,504,2,2,9,9],[267,342,6,1,13,9],[495,711,2,5,18,11],
	[564,711,6,1,13,9],[147,792,8,1,20,9]], 735, 0);
for (t = 0; t < 12; t++) {
	hole(1229 + t * 15, 275, 12, 6);
}
// loose vias: x, y, width, height, count
[[740,30,500,80,46],[740,110,230,130,34],[960,60,180,150,16],[1100,170,180,130,22],[980,230,160,90,20],[1240,45,180,90,24],
	[1340,230,100,90,8],[1230,740,210,95,36],[960,650,240,180,40],[740,740,200,90,12],[740,850,110,40,10],
	[885,726,150,26,16],[780,430,60,80,10],[1140,450,130,60,10],[1160,250,70,160,6],[985,345,100,40,12]].forEach(function (s) {
	scatter(s[0], s[1], s[2], s[3], s[4]);
});

// BGA
for (var r = 0; r < 29; r++) {
	for (var c = 0; c < 28; c++) {
		var left = c < 14;
		var x = (left ? 851 : 861) + c * 9;
		var thin = left ? (r > 6 && r < 14 && c < 10) : (r < 10 && c > 16);
		if (thin && rnd() > 0.4 || rnd() < 0.04) {
			continue;
		}
		hole(x, 372 + r * 9, (r % 6 === 1 && rnd() > 0.4) ? 9 : 6, r % 6 === 1 ? 9 : 6);
	}
}
// memory sockets
[320, 369, 427, 472, 531, 577, 636, 684].forEach(function (y, i) {
	for (var c = 0; c < 4; c++) {
		hole(1242 + c * 27, y + (i % 2 ? 3 : 0), 24, i % 2 ? 12 : 15);
		hole(1236 + c * 27, y - 9, 12, 6);
		hole(1248 + c * 27, y - 6, 6, 9);
	}
});

function shape(name, attrs) {
	var el = document.createElementNS(NS, name);
	for (var k in attrs) {
		el.setAttribute(k, attrs[k]);
	}
	board.appendChild(el);
}

shape('path', {d: d, fill: '#4c9018', 'shape-rendering': 'crispEdges'});
[[106, 160, '#489404'], [1132, 345, '#489404'], [810, 664, '#489404'], [1425, 61, '#c09408'], [1425, 817, '#c09408'], [106, 880, '#c09408']].forEach(function (p) {
	shape('circle', {cx: p[0], cy: p[1], r: 14, fill: p[2]});
});
```
